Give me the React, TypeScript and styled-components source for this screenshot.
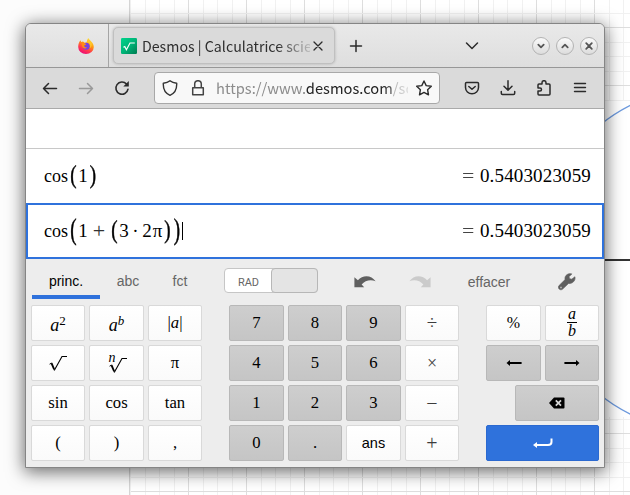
import React from "react";
import styled, { createGlobalStyle, css } from "styled-components";

const Global = createGlobalStyle`
  * { box-sizing: border-box; }
  html, body { margin: 0; padding: 0; overflow: hidden; }
  svg { display: block; flex: none; }
`;

const BLUE = "#2f72dc";

const Desktop = styled.div`
  position: relative;
  width: 630px;
  height: 495px;
  padding: 23px 25px 27px;
  background: #fff;
  overflow: hidden;
`;

const Backdrop = styled.svg`
  position: absolute;
  inset: 0;
`;

const Window = styled.div`
  position: relative;
  display: flex;
  flex-direction: column;
  width: 580px;
  height: 445px;
  border: 1px solid #858585;
  border-radius: 6px 6px 0 0;
  box-shadow: 0 3px 17px 1px rgba(0, 0, 0, 0.58);
  background: #ededed;
  overflow: hidden;
  flex: none;
`;

const TabBar = styled.div`
  display: flex;
  align-items: center;
  height: 44px;
  flex: none;
  border-bottom: 1px solid #979797;
  background: linear-gradient(#e9e9e9, #dedede);
`;

const PinnedTab = styled.div`
  display: flex;
  align-items: center;
  justify-content: flex-end;
  width: 83px;
  height: 43px;
  padding-right: 14px;
  border-right: 1px solid #a5a5a5;
`;

const ActiveTab = styled.div`
  display: flex;
  align-items: center;
  width: 222px;
  height: 37px;
  margin-left: 4px;
  padding-left: 7px;
  border: 1px solid #c0c0c0;
  border-radius: 5px;
  background: #dadada;
  box-shadow: 0 0 3px rgba(0, 0, 0, 0.22);
`;

const fade = (from: string) => css`
  mask-image: linear-gradient(to right, #000 ${from}, transparent 104%);
`;

const TabTitle = styled.div`
  width: 168px;
  margin-left: 5px;
  white-space: nowrap;
  font: 14.2px/20px "Noto Sans CJK SC", "Noto Sans", sans-serif;
  color: #2e2e2e;
  ${fade("80%")}
`;

const Slot = styled.div<{ $w: number; $ml?: number }>`
  display: flex;
  align-items: center;
  justify-content: center;
  flex: none;
  width: ${(p) => p.$w}px;
  margin-left: ${(p) => p.$ml ?? 0}px;
`;

const WindowButton = styled.div`
  display: flex;
  align-items: center;
  justify-content: center;
  width: 18px;
  height: 18px;
  border: 1px solid #b3b3b3;
  border-radius: 50%;
  background: linear-gradient(#fafafa, #dcdcdc);
`;

const WindowButtons = styled.div`
  display: flex;
  gap: 6px;
  margin-left: 48px;
`;

const NavBar = styled.div`
  display: flex;
  align-items: center;
  height: 41px;
  flex: none;
  padding: 0 6px;
  border-bottom: 1px solid #aaa;
  background: #dadada;
`;

const UrlField = styled.div`
  display: flex;
  align-items: center;
  width: 286px;
  height: 32px;
  margin: 0 14px;
  border: 1px solid #a8a8a8;
  border-radius: 4px;
  background: #f8f8f8;
`;

const Url = styled.div`
  width: 192px;
  margin-left: 5px;
  white-space: nowrap;
  font: 14.7px/20px "Noto Sans CJK SC", "Noto Sans", sans-serif;
  color: #8c8c8c;
  ${fade("86%")}
  b { font-weight: 400; color: #222; }
`;

const Spacer = styled.div`
  height: 40px;
  flex: none;
  border-bottom: 1px solid #c8c8c8;
  background: #fff;
`;

const Expression = styled.div<{ $active?: boolean }>`
  display: flex;
  align-items: center;
  height: ${(p) => (p.$active ? 56 : 54)}px;
  flex: none;
  padding: 0 ${(p) => (p.$active ? 11 : 13)}px 0 ${(p) => (p.$active ? 15 : 17)}px;
  border: ${(p) => (p.$active ? `2px solid ${BLUE}` : "0")};
  background: #fff;
  font: 19px/24px "Liberation Serif", serif;
  color: #000;
`;

const Token = styled.span<{ $w: number; $size?: number; $color?: string }>`
  display: flex;
  justify-content: center;
  width: ${(p) => p.$w}px;
  font-size: ${(p) => p.$size ?? 19}px;
  color: ${(p) => p.$color ?? "#000"};
`;

const Paren = styled.span<{ $w: number; $stretch: number }>`
  display: flex;
  justify-content: center;
  width: ${(p) => p.$w}px;
  height: 24px;
  margin-top: -2px;
  -webkit-text-stroke: 0.35px #000;
  transform: scaleY(${(p) => p.$stretch});
`;

const Caret = styled.span`
  width: 1px;
  height: 18px;
  background: #000;
`;

const Result = styled.span`
  display: flex;
  gap: 5px;
  margin-left: auto;
  letter-spacing: 0.15px;
`;

const Equals = styled.span`
  width: 12px;
  color: #444;
  transform: scaleX(1.15);
`;

const PadHeader = styled.div`
  display: flex;
  align-items: center;
  height: 45px;
  flex: none;
  padding-left: 6px;
  font: 14px/18px "Liberation Sans", sans-serif;
  color: #666;
`;

const PadTab = styled.div<{ $w: number; $active?: boolean }>`
  width: ${(p) => p.$w}px;
  height: 37px;
  margin-top: -2px;
  padding-top: 10px;
  text-align: center;
  color: ${(p) => (p.$active ? "#000" : "#666")};
  border-bottom: 4px solid ${(p) => (p.$active ? BLUE : "transparent")};
`;

const Toggle = styled.div`
  display: flex;
  width: 94px;
  height: 25px;
  margin: -2px 0 0 20px;
  border: 1px solid #c6c6c6;
  border-radius: 4px;
  background: #fff;
`;

const ToggleLabel = styled.div`
  width: 47px;
  text-align: center;
  font: 11px/27px Roboto, sans-serif;
  color: #666;
`;

const ToggleKnob = styled.div`
  width: 47px;
  margin: -1px;
  border: 1px solid #b7b7b7;
  border-radius: 4px;
  background: #e4e4e4;
`;

const Pad = styled.div`
  display: flex;
  padding: 1px 5px 0;
`;

const KeyGroup = styled.div<{ $cols: string; $ml?: number }>`
  display: grid;
  grid-template-columns: ${(p) => p.$cols};
  grid-auto-rows: 36px;
  gap: 4px;
  margin-left: ${(p) => p.$ml ?? 0}px;
`;

const tones = {
  light: css`
    border-color: #d9d9d9;
    background: linear-gradient(#fff, #fafafa);
    color: #000;
  `,
  dark: css`
    border-color: #b8b8b8;
    background: linear-gradient(#cecece, #c5c5c5);
    color: #000;
  `,
  blue: css`
    border-color: #2b69d0;
    background: ${BLUE};
    color: #fff;
  `,
};

const Key = styled.div<{ $tone?: keyof typeof tones; $sans?: boolean; $size?: number; $span?: boolean; $indent?: number }>`
  display: flex;
  align-items: center;
  justify-content: center;
  border: 1px solid;
  border-radius: 2px;
  font: ${(p) => p.$size ?? 16.7}px/20px ${(p) => (p.$sans ? '"Liberation Sans", sans-serif' : '"Liberation Serif", serif')};
  ${(p) => p.$span && "grid-column: 1 / -1;"}
  margin-left: ${(p) => p.$indent ?? 0}px;
  ${(p) => tones[p.$tone ?? "light"]}
`;

const Operator = styled(Key)`
  color: #3c3c3c;
`;

const Power = styled.span`
  font-size: 18px;
  padding-top: 3px;
  i + * { font-size: 13px; line-height: 0; vertical-align: 6px; margin-left: 0; }
`;

const Fraction = styled.span`
  display: flex;
  flex-direction: column;
  align-items: center;
  width: 10px;
  margin-top: -2px;
  font: italic 16px/15px "Liberation Serif", serif;
  span:first-child { width: 10px; height: 17px; text-align: center; border-bottom: 1px solid #000; }
`;

const Root = styled.span`
  display: flex;
  align-items: flex-end;
  margin: 5px 0 0 2px;
  i { width: 8px; margin-right: -8px; font-size: 14px; align-self: flex-start; line-height: 2px; }
`;

type IconProps = { d: string; w?: number; size?: number; color?: string; cap?: "round" | "butt" };
const Line = ({ d, w = 1.5, size = 16, color = "#2b2b2b", cap = "round" }: IconProps) => (
  <svg width={size} height={size} viewBox="0 0 16 16" fill="none" stroke={color} strokeWidth={w} strokeLinecap={cap} strokeLinejoin="round">
    <path d={d} />
  </svg>
);

const RootSign = () => (
  <svg width="18" height="17" viewBox="0 0 18 17" fill="none" stroke="#000">
    <path d="M.6 9.2 2.6 8" strokeWidth="1" />
    <path d="M2.5 8.2 5.2 14.5" strokeWidth="1.9" />
    <path d="M5.2 15.5 13 1.5H18" strokeWidth="1.1" />
  </svg>
);

const CurvedArrow = ({ flip }: { flip?: boolean }) => (
  <svg width="22" height="14" viewBox="0 0 22 14">
    <path
      transform={flip ? "translate(22 0) scale(-1 1)" : undefined}
      fill={flip ? "#cbcbcb" : "#606060"}
      d="M.4 2.2V12.3H10.2L7.6 9.6C11 5.600 16.500 4.300 21.600 6.300 17.600 0 8.800-.6 3.900 5.300Z"
    />
  </svg>
);

const LongArrow = ({ flip }: { flip?: boolean }) => (
  <svg width="16" height="8" viewBox="0 0 16 8">
    <g transform={flip ? "translate(16 0) scale(-1 1)" : undefined}>
      <path d="M.5 4 4 1V7Z" />
      <path d="M3 4H15.6" stroke="#000" strokeWidth="2" />
    </g>
  </svg>
);

const Firefox = () => (
  <svg width="16" height="16" viewBox="0 0 16 16">
    <defs>
      <linearGradient id="ff" x1=".8" y1="0" x2=".3" y2="1">
        <stop offset="0" stopColor="#fff044" />
        <stop offset=".4" stopColor="#ff980e" />
        <stop offset=".72" stopColor="#ff3750" />
        <stop offset="1" stopColor="#eb0878" />
      </linearGradient>
    </defs>
    <path fill="url(#ff)" d="M10.4 0C10.8 2 15.8 4.2 15.8 9A7.8 7 0 0 1 .2 9C.2 6 1.2 4 2.5 2.3L3.2 4 5 3.4 6.6 4.7 8.6 4.5C9 2.5 9.4 1 10.4 0Z" />
    <circle cx="8.2" cy="8.2" r="3.5" fill="#7542e5" />
    <path fill="#ff8a16" d="M3.6 5.3C5 4.2 7 4.6 8.3 6.4L6.5 7.2C5.8 8.5 7 9.6 9 9.3 7.2 12 3.4 10.2 3.6 5.3Z" />
    <path fill="#ffc62b" d="M9 4.2C12.3 4.7 13 8 11.5 10.5 15 8.5 14.3 3.8 10.6 1.6Z" />
  </svg>
);

const Favicon = () => (
  <svg width="16" height="16" viewBox="0 0 16 16">
    <defs>
      <linearGradient id="fav" x1="0" y1="0" x2="1" y2="1">
        <stop offset="0" stopColor="#00d48b" />
        <stop offset=".5" stopColor="#00b578" />
        <stop offset="1" stopColor="#007c51" />
      </linearGradient>
    </defs>
    <rect width="16" height="16" rx="1.3" fill="url(#fav)" />
    <path d="M2.4 9.2 3.8 8.5 5.4 11.8 9 5H13.8" fill="none" stroke="#fff" strokeWidth="1.1" />
  </svg>
);

const Wrench = () => (
  <svg width="18" height="18" viewBox="0 0 18 18">
    <path
      fill="#5f5f5f"
      stroke="#5f5f5f"
      strokeWidth=".7"
      fillRule="evenodd"
      d="M16.9 3.8 13.8 6.2 11.5 5.700 11 3.700 13.800.9C10.400-.1 6.700 2.200 7 5.700L7.100 6.600 1.100 12.500C-1 14.800 2.100 18.200 4.600 16.100L10.500 10.400C14.300 11 17.800 7.700 16.900 3.800ZM3 13.500A1 1 0 1 1 3 15.500 1 1 0 0 1 3 13.500Z"
    />
  </svg>
);

const Graph = () => {
  const xs = Array.from({ length: 36 }, (_, i) => i).filter((i) => i > 0);
  const ys = Array.from({ length: 35 }, (_, i) => i);
  return (
    <Backdrop width="630" height="495" viewBox="0 0 630 495">
      {xs.map((i) => {
        const x = Math.round(130 + i * 14.5) + 0.5;
        return <path key={i} d={`M${x} 0V495`} stroke={i % 4 === 0 ? "#dedede" : "#f1f1f1"} />;
      })}
      {ys.map((i) => {
        const y = Math.round(-2 + i * 14.5) + 0.5;
        return <path key={i} d={`M130 ${y}H630`} stroke={i % 4 === 2 ? "#dedede" : "#f1f1f1"} />;
      })}
      <path d="M600 101H630V417H600Z" fill="#fff" />
      <path d="M0 0H129V495H0Z" fill="#fcfcfc" />
      <path d="M129.5 0V495" stroke="#d5d5d5" />
      <path d="M130.5 0V495" stroke="#f0f0f0" />
      <path d="M600 260H630" stroke="#333" strokeWidth="2" />
      <path d="M600 125Q614 113.500 631 105M600 394.500Q612 405 631 414.500" fill="none" stroke="#6d9ade" strokeWidth="1.3" />
    </Backdrop>
  );
};

export default function App() {
  return (
    <>
      <Global />
      <Desktop>
        <Graph />
        <Window>
          <TabBar>
            <PinnedTab><Firefox /></PinnedTab>
            <ActiveTab>
              <Favicon />
              <TabTitle>Desmos | Calculatrice scie</TabTitle>
              <Slot $w={16}><Line w={1.3} d="M4 4 12 12M12 4 4 12" /></Slot>
            </ActiveTab>
            <Slot $w={24} $ml={9}><Line w={1.5} d="M8 2.500V13.500M2.500 8H13.500" /></Slot>
            <Slot $w={24} $ml={92}><Line w={1.5} d="M2.500 5 8 10.500 13.500 5" /></Slot>
            <WindowButtons>
              <WindowButton><Line w={1.8} color="#555" d="M5.300 6.700 8 9.300 10.700 6.700" /></WindowButton>
              <WindowButton><Line w={1.8} color="#555" d="M5.300 9.300 8 6.700 10.700 9.300" /></WindowButton>
              <WindowButton><Line w={1.8} color="#555" d="M5.200 5.200 10.800 10.800M10.800 5.200 5.200 10.800" /></WindowButton>
            </WindowButtons>
          </TabBar>
          <NavBar>
            <Slot $w={36}><Line d="M14.500 8.500H1.500M6.500 3.500 1.500 8.500 6.500 13.500" /></Slot>
            <Slot $w={36}><Line color="#999" d="M1.500 8.500H14.500M9.500 3.500 14.500 8.500 9.500 13.500" /></Slot>
            <Slot $w={36}>
              <svg width="16" height="16" viewBox="0 0 16 16">
                <path d="M14 9.200A6.100 6.100 0 1 1 12.500 4" fill="none" stroke="#2b2b2b" strokeWidth="1.6" strokeLinecap="round" />
                <path d="M14.800 1V6.500H9.300Z" fill="#2b2b2b" />
              </svg>
            </Slot>
            <UrlField>
              <Slot $w={30}><Line w={1.4} color="#333" d="M8 .8C6.300 2.200 3.500 3 1.300 3.200 1 9 3.500 13.500 8 15.300 12.500 13.500 15 9 14.700 3.200 12.500 3 9.700 2.200 8 .8Z" /></Slot>
              <Slot $w={26}><Line w={1.5} color="#444" d="M2.700 7.800H13.300V14.800H2.700ZM4.700 7.500V4A3.300 3.300 0 0 1 11.300 4V7.500" /></Slot>
              <Url>https://www.<b>desmos.com</b>/sc</Url>
              <Slot $w={32}><Line w={1.4} d="M8 1 10.200 5.600 15.300 6.200 11.600 9.700 12.500 14.800 8 12.400 3.500 14.800 4.400 9.700 .7 6.200 5.800 5.600Z" /></Slot>
            </UrlField>
            <Slot $w={36}><Line d="M2.500 2.500H13.500Q14.500 2.500 14.500 3.500V7.500A6.500 6.300 0 0 1 1.500 7.500V3.500Q1.500 2.500 2.500 2.500ZM4.800 6.500 8 9.300 11.200 6.500" /></Slot>
            <Slot $w={36}><Line d="M8 .8V10M4 6.300 8 10.300 12 6.300M1.300 11.500V13.300Q1.300 14.500 2.500 14.500H13.500Q14.700 14.500 14.700 13.300V11.500" /></Slot>
            <Slot $w={36}><Line d="M2 5Q2 4 3 4H6V2.700A2 2 0 0 1 10 2.700V4H13Q14 4 14 5V14Q14 15 13 15H3Q2 15 2 14V11H4A1.500 1.500 0 0 0 4 8H2Z" /></Slot>
            <Slot $w={36}><Line w={1.4} d="M2.500 3.500H13.500M2.500 7.500H13.500M2.500 11.500H13.500" /></Slot>
          </NavBar>
          <Spacer />
          <Expression>
            <Token $w={26} $size={18}>cos</Token>
            <Paren $w={9} $stretch={1.3}>(</Paren>
            <Token $w={10}>1</Token>
            <Paren $w={10} $stretch={1.3}>)</Paren>
            <Result><Equals>=</Equals>0.5403023059</Result>
          </Expression>
          <Expression $active>
            <Token $w={26} $size={18}>cos</Token>
            <Paren $w={9} $stretch={1.5}>(</Paren>
            <Token $w={10}>1</Token>
            <Token $w={22} $size={22} $color="#333">+</Token>
            <Paren $w={9} $stretch={1.3}>(</Paren>
            <Token $w={10}>3</Token>
            <Token $w={13}>·</Token>
            <Token $w={10}>2</Token>
            <Token $w={11}>π</Token>
            <Paren $w={9} $stretch={1.3}>)</Paren>
            <Paren $w={10} $stretch={1.5}>)</Paren>
            <Caret />
            <Result><Equals>=</Equals>0.5403023059</Result>
          </Expression>
          <PadHeader>
            <PadTab $w={68} $active>princ.</PadTab>
            <PadTab $w={56}>abc</PadTab>
            <PadTab $w={48}>fct</PadTab>
            <Toggle>
              <ToggleLabel>RAD</ToggleLabel>
              <ToggleKnob />
            </Toggle>
            <Slot $w={74} $ml={10}><CurvedArrow /></Slot>
            <Slot $w={36}><CurvedArrow flip /></Slot>
            <Slot $w={102}>effacer</Slot>
            <Slot $w={54}><Wrench /></Slot>
          </PadHeader>
          <Pad>
            <KeyGroup $cols="54px 55px 54px">
              <Key><Power><i>a</i><span>2</span></Power></Key>
              <Key><Power><i>a</i><i>b</i></Power></Key>
              <Key><span>|<i>a</i>|</span></Key>
              <Key><RootSign /></Key>
              <Key><Root><i>n</i><RootSign /></Root></Key>
              <Key>π</Key>
              <Key>sin</Key>
              <Key>cos</Key>
              <Key>tan</Key>
              <Key>(</Key>
              <Key>)</Key>
              <Key>,</Key>
            </KeyGroup>
            <KeyGroup $cols="55px 54px 55px 54px" $ml={27}>
              <Key $tone="dark">7</Key>
              <Key $tone="dark">8</Key>
              <Key $tone="dark">9</Key>
              <Operator $size={19}>÷</Operator>
              <Key $tone="dark">4</Key>
              <Key $tone="dark">5</Key>
              <Key $tone="dark">6</Key>
              <Operator $size={18}>×</Operator>
              <Key $tone="dark">1</Key>
              <Key $tone="dark">2</Key>
              <Key $tone="dark">3</Key>
              <Operator $size={20}>−</Operator>
              <Key $tone="dark">0</Key>
              <Key $tone="dark">.</Key>
              <Key $sans $size={14.5}>ans</Key>
              <Operator $size={20}>+</Operator>
            </KeyGroup>
            <KeyGroup $cols="55px 54px" $ml={27}>
              <Key $size={16}>%</Key>
              <Key><Fraction><span>a</span><span>b</span></Fraction></Key>
              <Key $tone="dark"><LongArrow /></Key>
              <Key $tone="dark"><LongArrow flip /></Key>
              <Key $tone="dark" $span $indent={29}>
                <svg width="16" height="12" viewBox="0 0 16 12">
                  <path d="M0 6 5 .5H14.500Q15.500.500 15.500 1.500V10.500Q15.500 11.500 14.500 11.500H5Z" />
                  <path d="M6.800 3.300 12 8.700M12 3.300 6.800 8.700" stroke="#d8d8d8" strokeWidth="1.700" />
                </svg>
              </Key>
              <Key $tone="blue" $span>
                <svg width="20" height="12" viewBox="0 0 20 12">
                  <path d="M0 8 4 5V11Z" fill="#fff" />
                  <path d="M3 8H15Q18.500 8 18.500 5V1.500" fill="none" stroke="#fff" strokeWidth="2" />
                </svg>
              </Key>
            </KeyGroup>
          </Pad>
        </Window>
      </Desktop>
    </>
  );
}
